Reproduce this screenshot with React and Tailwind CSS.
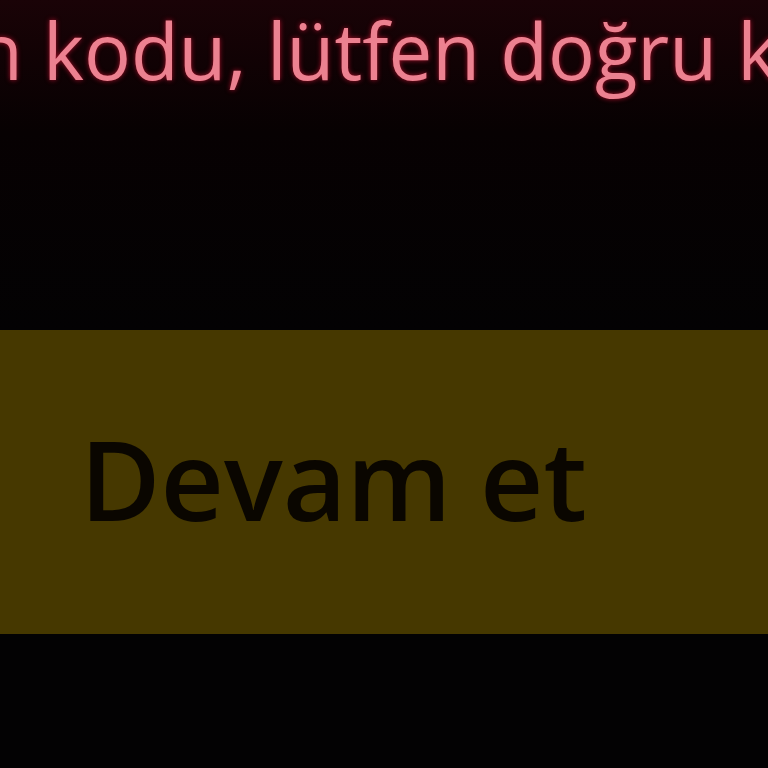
import React from "react";

export default function App() {
  return (
    <div className="w-[768px] h-[768px] overflow-hidden bg-[#030203] flex flex-col" style={{ fontFamily: '"Open Sans", sans-serif' }}>
      <div className="h-[330px] flex flex-col bg-gradient-to-b from-[#1a0307] via-[#070102] via-40% to-[#030203]">
        <div className="whitespace-nowrap text-[78px] leading-[100px] text-[#ec8190] ml-[-594px] mt-0 [text-shadow:0_0_5px_#a8102a]">
          Yanlış aktivasyon kodu, lütfen doğru kodu girin
        </div>
      </div>
      <div className="h-[304px] bg-[#463800] flex items-center pl-[80px]">
        <span className="text-[110px] font-semibold text-[#0a0600] mt-[-8px]">Devam et</span>
      </div>
      <div className="flex-1 bg-[#030203]"></div>
    </div>
  );
}
